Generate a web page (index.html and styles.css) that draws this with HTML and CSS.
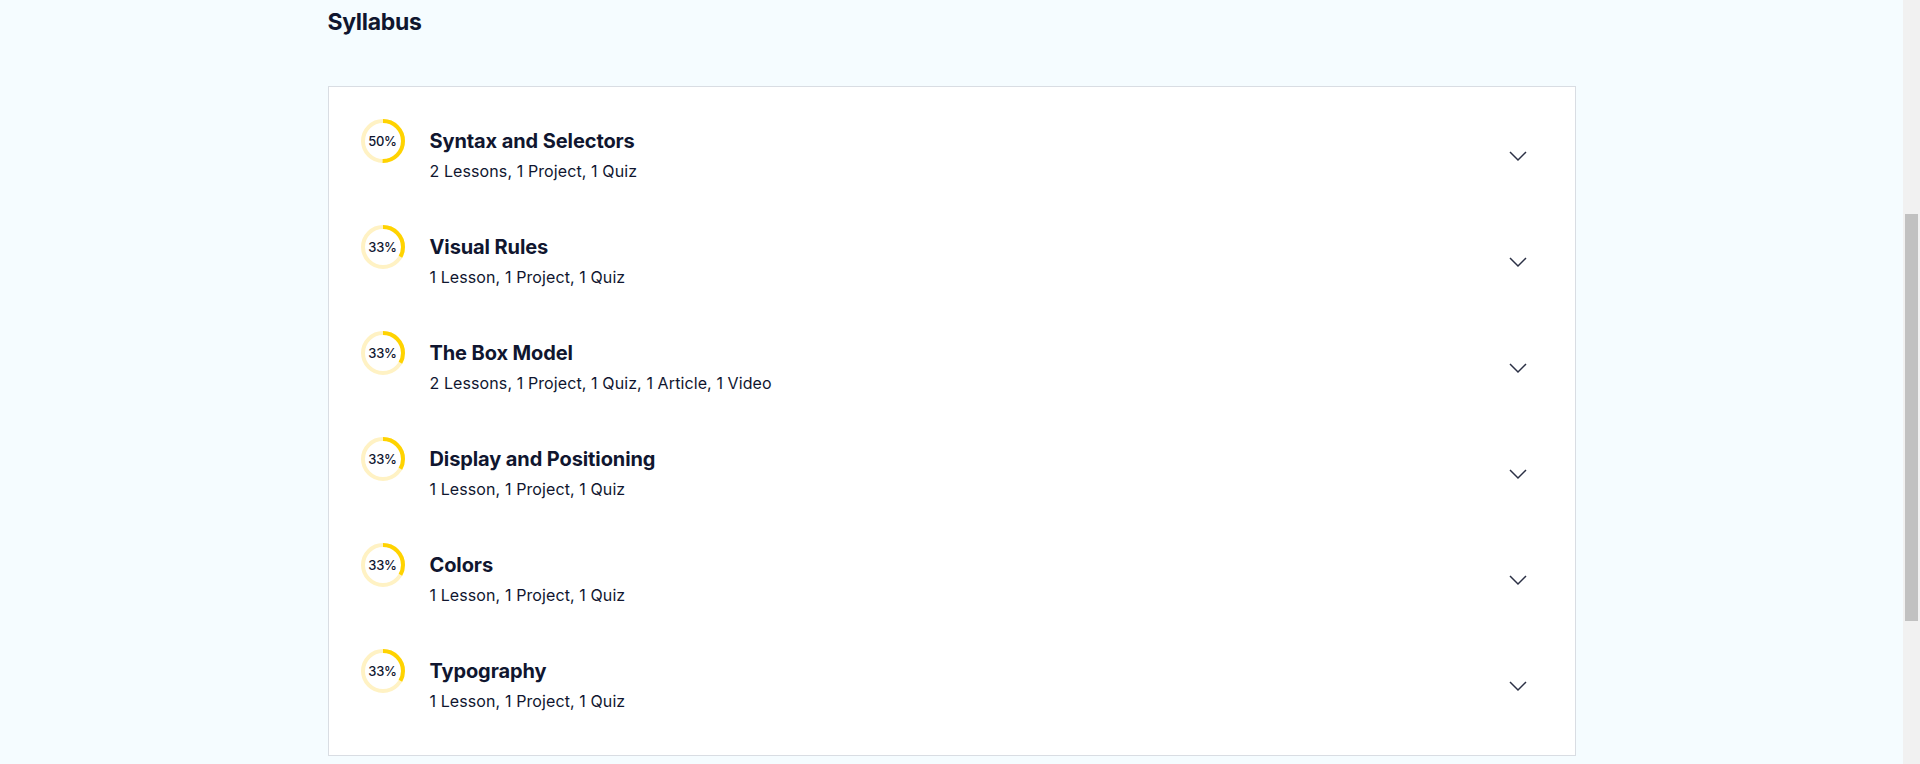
FILE: index.html
```html
<!DOCTYPE html>
<html lang="en">
<head>
<meta charset="utf-8">
<title>Syllabus</title>
<link rel="stylesheet" href="styles.css">
</head>
<body>
<div class="page">
  <main class="main">
    <section class="syllabus">
      <h2 class="heading">Syllabus</h2>
      <ul class="card">
        <li class="row">
          <div class="ring">
            <svg viewBox="0 0 44 44" width="44" height="44"><circle class="track" cx="22" cy="22" r="20"/><circle class="bar" cx="22" cy="22" r="20" style="stroke-dasharray: 62.83 125.66"/></svg>
            <span class="pct">50%</span>
          </div>
          <div class="info"><div class="title">Syntax and Selectors</div><div class="meta">2 Lessons, 1 Project, 1 Quiz</div></div>
          <svg class="chev" viewBox="0 0 24 24" width="24" height="24"><path d="M4 8 L12 16 L20 8"/></svg>
        </li>
        <li class="row">
          <div class="ring">
            <svg viewBox="0 0 44 44" width="44" height="44"><circle class="track" cx="22" cy="22" r="20"/><circle class="bar" cx="22" cy="22" r="20" style="stroke-dasharray: 41.47 125.66"/></svg>
            <span class="pct">33%</span>
          </div>
          <div class="info"><div class="title">Visual Rules</div><div class="meta">1 Lesson, 1 Project, 1 Quiz</div></div>
          <svg class="chev" viewBox="0 0 24 24" width="24" height="24"><path d="M4 8 L12 16 L20 8"/></svg>
        </li>
        <li class="row">
          <div class="ring">
            <svg viewBox="0 0 44 44" width="44" height="44"><circle class="track" cx="22" cy="22" r="20"/><circle class="bar" cx="22" cy="22" r="20" style="stroke-dasharray: 41.47 125.66"/></svg>
            <span class="pct">33%</span>
          </div>
          <div class="info"><div class="title">The Box Model</div><div class="meta">2 Lessons, 1 Project, 1 Quiz, 1 Article, 1 Video</div></div>
          <svg class="chev" viewBox="0 0 24 24" width="24" height="24"><path d="M4 8 L12 16 L20 8"/></svg>
        </li>
        <li class="row">
          <div class="ring">
            <svg viewBox="0 0 44 44" width="44" height="44"><circle class="track" cx="22" cy="22" r="20"/><circle class="bar" cx="22" cy="22" r="20" style="stroke-dasharray: 41.47 125.66"/></svg>
            <span class="pct">33%</span>
          </div>
          <div class="info"><div class="title">Display and Positioning</div><div class="meta">1 Lesson, 1 Project, 1 Quiz</div></div>
          <svg class="chev" viewBox="0 0 24 24" width="24" height="24"><path d="M4 8 L12 16 L20 8"/></svg>
        </li>
        <li class="row">
          <div class="ring">
            <svg viewBox="0 0 44 44" width="44" height="44"><circle class="track" cx="22" cy="22" r="20"/><circle class="bar" cx="22" cy="22" r="20" style="stroke-dasharray: 41.47 125.66"/></svg>
            <span class="pct">33%</span>
          </div>
          <div class="info"><div class="title">Colors</div><div class="meta">1 Lesson, 1 Project, 1 Quiz</div></div>
          <svg class="chev" viewBox="0 0 24 24" width="24" height="24"><path d="M4 8 L12 16 L20 8"/></svg>
        </li>
        <li class="row">
          <div class="ring">
            <svg viewBox="0 0 44 44" width="44" height="44"><circle class="track" cx="22" cy="22" r="20"/><circle class="bar" cx="22" cy="22" r="20" style="stroke-dasharray: 41.47 125.66"/></svg>
            <span class="pct">33%</span>
          </div>
          <div class="info"><div class="title">Typography</div><div class="meta">1 Lesson, 1 Project, 1 Quiz</div></div>
          <svg class="chev" viewBox="0 0 24 24" width="24" height="24"><path d="M4 8 L12 16 L20 8"/></svg>
        </li>
      </ul>
    </section>
  </main>
  <div class="scrollbar"><div class="thumb"></div></div>
</div>
</body>
</html>
```
FILE: styles.css
```css
html, body {
  margin: 0;
  padding: 0;
  height: 764px;
  overflow: hidden;
}
body {
  background: #f5fcff;
  color: #10162f;
  font-family: Inter, "Noto Sans", sans-serif;
}
.page {
  display: flex;
  height: 764px;
}
.main {
  flex: 1;
  min-width: 0;
}
.syllabus {
  width: 1248px;
  margin: 0 auto;
}
.heading {
  margin: 0;
  padding-top: 6px;
  font-size: 23px;
  line-height: 32px;
  font-weight: 700;
  letter-spacing: -0.3px;
}
.card {
  list-style: none;
  margin: 48px 0 0;
  padding: 16px 0;
  background: #fff;
  border: 1px solid #d9dde3;
}
.row {
  display: flex;
  align-items: center;
  height: 74px;
  padding: 16px 45px 16px 32px;
}
.ring {
  position: relative;
  align-self: flex-start;
  width: 44px;
  height: 44px;
  flex: none;
}
.ring svg {
  display: block;
  transform: rotate(-90deg);
}
.track {
  fill: none;
  stroke: #fff2c4;
  stroke-width: 4;
}
.bar {
  fill: none;
  stroke: #ffd300;
  stroke-width: 4;
}
.pct {
  position: absolute;
  inset: 0;
  display: flex;
  align-items: center;
  justify-content: center;
  font-size: 13px;
  font-weight: 500;
  letter-spacing: -0.3px;
}
.info {
  flex: 1;
  margin-left: 25px;
  align-self: flex-start;
  padding-top: 8px;
}
.title {
  font-size: 20px;
  line-height: 28px;
  font-weight: 700;
  letter-spacing: -0.1px;
}
.meta {
  margin-top: 4px;
  font-size: 16px;
  line-height: 24px;
  font-weight: 400;
  letter-spacing: 0.1px;
}
.chev {
  flex: none;
  fill: none;
  stroke: #2b3045;
  stroke-width: 1.5;
}
.scrollbar {
  width: 17px;
  flex: none;
  background: #f1f1f1;
  padding: 214px 2px 0;
  box-sizing: border-box;
}
.thumb {
  height: 407px;
  background: #c1c1c1;
}
```
